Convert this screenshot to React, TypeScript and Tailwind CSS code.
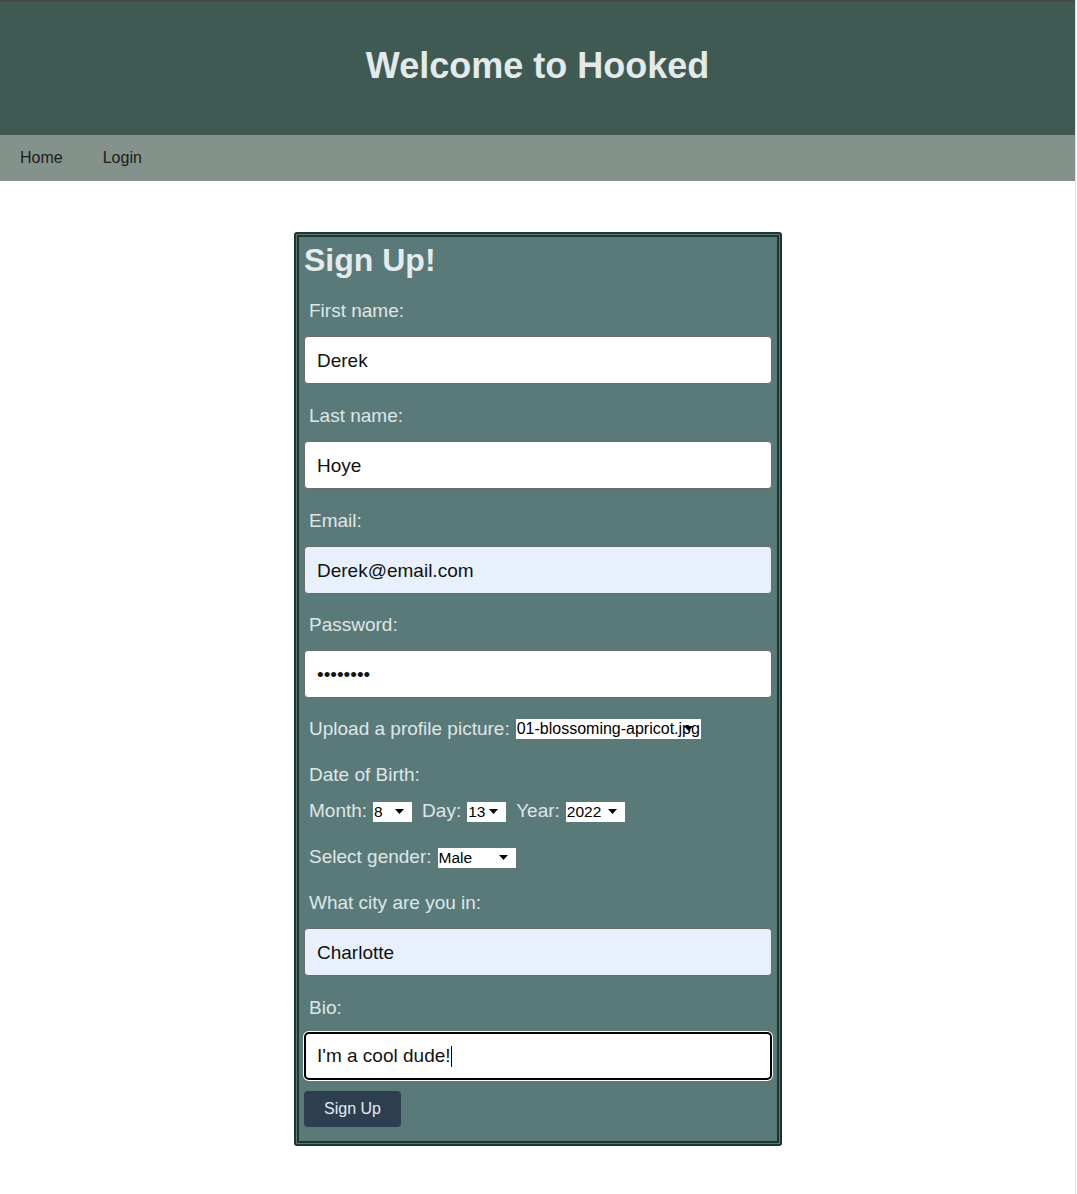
import React from 'react';

const Caret = () => (
  <svg width="9" height="5" viewBox="0 0 9 5" className="shrink-0">
    <path d="M0 0 L9 0 L4.5 5 Z" fill="#000" />
  </svg>
);

interface FakeSelectProps {
  value: string;
  width: string;
}

const FakeSelect: React.FC<FakeSelectProps> = ({ value, width }) => (
  <span
    className={`inline-flex items-center justify-between h-[20px] bg-white text-black text-[15.5px] leading-[20px] pl-[1px] pr-[8px] ${width}`}
  >
    <span>{value}</span>
    <Caret />
  </span>
);

interface TextFieldProps {
  label: string;
  value: string;
  autofill?: boolean;
  top?: string;
}

const TextField: React.FC<TextFieldProps> = ({ label, value, autofill, top = 'mt-[22px]' }) => (
  <>
    <label className={`block ml-[5px] h-[21px] leading-[21px] text-[19px] ${top}`}>{label}</label>
    <div
      className={`mt-[15px] h-[48px] flex items-center pl-[12px] pt-[2px] rounded-[4px] border border-[#6b6b6b] text-[19px] text-[#111] ${
        autofill ? 'bg-[#e8f0fe]' : 'bg-white'
      }`}
    >
      {value}
    </div>
  </>
);

export default function App() {
  return (
    <div
      className="w-[1076px] min-h-[1194px] bg-white border-r border-[#e2e2e2]"
      style={{ fontFamily: '"Liberation Sans", Arial, sans-serif' }}
    >
      <header className="h-[135px] bg-[#3e5a53] border-t-2 border-[#4a4a4a] flex items-center justify-center">
        <h1 className="text-[36px] font-bold text-[#e4eaea] -mt-[6px]">Welcome to Hooked</h1>
      </header>
      <nav className="h-[46px] bg-[#84928c] flex items-center text-[16px] text-[#1c1c1c]">
        <a className="ml-[20px]">Home</a>
        <a className="ml-[40px]">Login</a>
      </nav>

      <div className="flex pl-[294px] pt-[51px] pb-[48px]">
        <form className="w-[488px] bg-[#5a7a7a] border-[5px] border-double border-[#1d3630] rounded-[3px] px-[5px] pt-[5px] pb-[14px] text-[#dfe6e6]">
          <h2 className="text-[32px] leading-[37px] font-bold text-[#e6eaea]">Sign Up!</h2>

          <TextField label="First name:" value="Derek" top="mt-[21px]" />
          <TextField label="Last name:" value="Hoye" top="mt-[21px]" />
          <TextField label="Email:" value="Derek@email.com" autofill top="mt-[21px]" />
          <TextField label="Password:" value="••••••••" top="mt-[20px]" />

          <div className="mt-[20px] ml-[5px] h-[22px] flex items-center text-[19px]">
            <span>Upload a profile picture:</span>
            <span className="relative ml-[6px] w-[185px] h-[20px] bg-white text-black text-[16px] leading-[20px] overflow-hidden whitespace-nowrap pl-[1px]">
              01-blossoming-apricot.jpg
              <span className="absolute right-[8px] top-[7px]">
                <Caret />
              </span>
            </span>
          </div>

          <div className="mt-[24px] ml-[5px] h-[21px] leading-[21px] text-[19px]">Date of Birth:</div>

          <div className="mt-[15px] ml-[5px] h-[22px] flex items-center text-[19px]">
            <span>Month:</span>
            <span className="ml-[6px]">
              <FakeSelect value="8" width="w-[39px]" />
            </span>
            <span className="ml-[10px]">Day:</span>
            <span className="ml-[6px]">
              <FakeSelect value="13" width="w-[39px]" />
            </span>
            <span className="ml-[10px]">Year:</span>
            <span className="ml-[6px]">
              <FakeSelect value="2022" width="w-[59px]" />
            </span>
          </div>

          <div className="mt-[24px] ml-[5px] h-[22px] flex items-center text-[19px]">
            <span>Select gender:</span>
            <span className="ml-[6px]">
              <FakeSelect value="Male" width="w-[78px]" />
            </span>
          </div>

          <TextField label="What city are you in:" value="Charlotte" autofill top="mt-[24px]" />

          <label className="block mt-[21px] ml-[5px] h-[21px] leading-[21px] text-[19px]">Bio:</label>
          <div className="mt-[14px] h-[48px] flex items-center pl-[11px] rounded-[5px] border-2 border-black shadow-[0_0_0_1px_#ffffff] bg-white text-[19px] text-[#111]">
            I'm a cool dude!
            <span className="inline-block w-px h-[21px] bg-black" />
          </div>

          <button
            type="button"
            className="mt-[11px] h-[36px] w-[97px] rounded-[4px] bg-[#2c3e50] text-[#e6ebef] text-[16px]"
          >
            Sign Up
          </button>
        </form>
      </div>
    </div>
  );
}
